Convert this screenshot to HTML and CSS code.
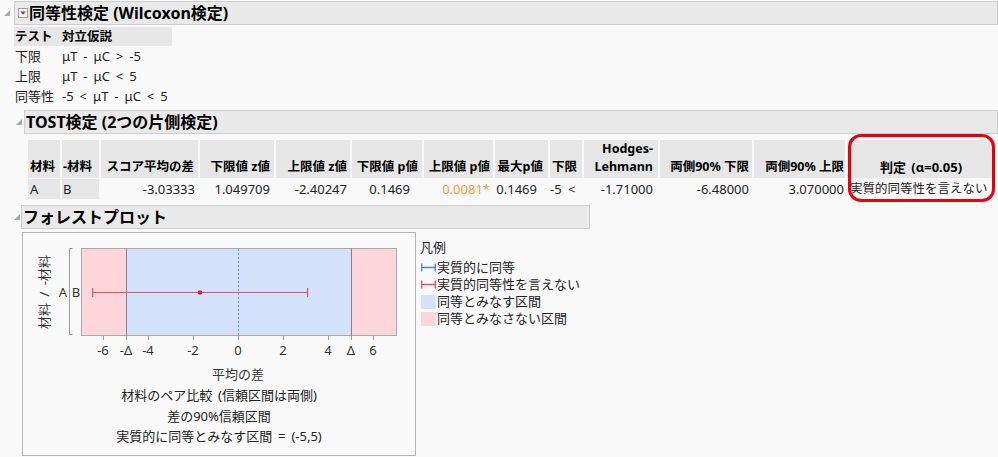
FILE: index.html
```html
<!DOCTYPE html>
<html lang="ja">
<head>
<meta charset="utf-8">
<title>同等性検定</title>
<link rel="stylesheet" href="styles.css">
</head>
<body>
<div class="report">

  <section class="outline o1">
    <div class="head">
      <svg class="disc" width="6" height="6" viewBox="0 0 6 6"><path d="M6 0V6H0Z" fill="#a9a9a9"/></svg>
      <div class="bar">
        <svg class="redtri" width="10" height="10" viewBox="0 0 10 10"><rect x="0.5" y="0.5" width="9" height="9" fill="#ffffff" stroke="#a0a0a0"/><path d="M2.2 3.6H7.8L5 6.8Z" fill="#d8141e"/></svg>
        <span class="title">同等性検定 (Wilcoxon検定)</span>
      </div>
    </div>
    <table class="hyp">
      <colgroup><col class="hc1"><col class="hc2"></colgroup>
      <thead><tr><th>テスト</th><th>対立仮説</th></tr></thead>
      <tbody>
        <tr><td>下限</td><td>μT - μC &gt; -5</td></tr>
        <tr><td>上限</td><td>μT - μC &lt; 5</td></tr>
        <tr><td>同等性</td><td>-5 &lt; μT - μC &lt; 5</td></tr>
      </tbody>
    </table>
  </section>

  <section class="outline o2">
    <div class="head">
      <svg class="disc" width="6" height="6" viewBox="0 0 6 6"><path d="M6 0V6H0Z" fill="#a9a9a9"/></svg>
      <div class="bar"><span class="title">TOST検定 (2つの片側検定)</span></div>
    </div>
    <table class="tost">
      <colgroup>
        <col class="w32"><col class="w37"><col class="w97"><col class="w74"><col class="w74"><col class="w70"><col class="w69"><col class="w53"><col class="w32"><col class="w74"><col class="w92"><col class="w91"><col class="w148">
      </colgroup>
      <thead>
        <tr>
          <th>材料</th><th>-材料</th><th>スコア平均の差</th><th>下限値 z値</th><th>上限値 z値</th><th>下限値 p値</th><th>上限値 p値</th><th>最大p値</th><th>下限</th><th>Hodges-<br>Lehmann</th><th>両側90% 下限</th><th>両側90% 上限</th><th>判定 (α=0.05)</th>
        </tr>
      </thead>
      <tbody>
        <tr>
          <td>A</td><td>B</td><td>-3.03333</td><td>1.049709</td><td>-2.40247</td><td>0.1469</td><td class="sig">0.0081*</td><td>0.1469</td><td class="lim">-5 &lt;</td><td>-1.71000</td><td>-6.48000</td><td>3.070000</td><td class="verdict">実質的同等性を言えない</td>
        </tr>
      </tbody>
    </table>
    <div class="callout"></div>
  </section>

  <section class="outline o3">
    <div class="head">
      <svg class="disc" width="6" height="6" viewBox="0 0 6 6"><path d="M6 0V6H0Z" fill="#a9a9a9"/></svg>
      <div class="bar"><span class="title">フォレストプロット</span></div>
    </div>
    <div class="plotrow">
      <div class="frame">
        <svg class="plot" width="392" height="152" viewBox="0 0 392 152">
          <rect x="58" y="15" width="45" height="88" fill="#fdd6dc"/>
          <rect x="103" y="15" width="225" height="88" fill="#d4e1fb"/>
          <rect x="328" y="15" width="46" height="88" fill="#fdd6dc"/>
          <rect x="58.5" y="15.5" width="315" height="87" fill="none" stroke="#a8a8a8"/>
          <line x1="103.5" y1="15" x2="103.5" y2="103" stroke="#8a7d98" stroke-width="1"/>
          <line x1="328.5" y1="15" x2="328.5" y2="103" stroke="#8a7d98" stroke-width="1"/>
          <line x1="215.5" y1="16" x2="215.5" y2="102" stroke="#5b8def" stroke-width="1" stroke-dasharray="2 2"/>
          <g stroke="#e8506a" stroke-width="1.2">
            <line x1="69.7" y1="59.5" x2="284.6" y2="59.5"/>
            <line x1="69.7" y1="55" x2="69.7" y2="64"/>
            <line x1="284.6" y1="55" x2="284.6" y2="64"/>
          </g>
          <circle cx="177" cy="59.5" r="2.3" fill="#e0203f"/>
          <g stroke="#9a9a9a" stroke-width="1">
            <line x1="80.5" y1="103" x2="80.5" y2="107"/>
            <line x1="125.5" y1="103" x2="125.5" y2="107"/>
            <line x1="170.5" y1="103" x2="170.5" y2="107"/>
            <line x1="215.5" y1="103" x2="215.5" y2="107"/>
            <line x1="260.5" y1="103" x2="260.5" y2="107"/>
            <line x1="305.5" y1="103" x2="305.5" y2="107"/>
            <line x1="350.5" y1="103" x2="350.5" y2="107"/>
            <line x1="103.5" y1="103" x2="103.5" y2="107"/>
            <line x1="328.5" y1="103" x2="328.5" y2="107"/>
            <path d="M49.5 15.5H46.5V101.5H49.5" fill="none"/>
          </g>
          <g class="ticks" text-anchor="middle">
            <text x="80" y="122">-6</text>
            <text x="103" y="122">-Δ</text>
            <text x="125" y="122">-4</text>
            <text x="170" y="122">-2</text>
            <text x="215" y="122">0</text>
            <text x="260" y="122">2</text>
            <text x="305" y="122">4</text>
            <text x="328" y="122">Δ</text>
            <text x="350" y="122">6</text>
            <text x="215" y="146">平均の差</text>
            <text x="40" y="64">A</text>
            <text x="53" y="64">B</text>
            <text class="ylab" x="0" y="0" transform="translate(26 59) rotate(-90)">材料 / -材料</text>
          </g>
        </svg>
        <div class="caption">
          <p>材料のペア比較 (信頼区間は両側)</p>
          <p>差の90%信頼区間</p>
          <p>実質的に同等とみなす区間 = (-5,5)</p>
        </div>
      </div>
      <div class="legend">
        <div class="ltitle">凡例</div>
        <ul class="litems">
          <li><svg class="licon" width="15" height="9" viewBox="0 0 15 9"><path d="M0.75 0.5V8.5M0.5 4.5H14.5M14.25 0.5V8.5" fill="none" stroke="#4a82f2" stroke-width="1.4"/></svg><span>実質的に同等</span></li>
          <li><svg class="licon" width="15" height="9" viewBox="0 0 15 9"><path d="M0.75 0.5V8.5M0.5 4.5H14.5M14.25 0.5V8.5" fill="none" stroke="#e8506a" stroke-width="1.4"/></svg><span>実質的同等性を言えない</span></li>
          <li><span class="sw blue"></span><span>同等とみなす区間</span></li>
          <li><span class="sw pink"></span><span>同等とみなさない区間</span></li>
        </ul>
      </div>
    </div>
  </section>

</div>
</body>
</html>
```

FILE: styles.css
```css
* { box-sizing: border-box; }
html, body { margin: 0; padding: 0; }
body {
  width: 998px;
  height: 457px;
  overflow: hidden;
  background: #f9f9f9;
  color: #222;
  font-family: "Noto Sans", "Noto Sans CJK JP", sans-serif;
  font-size: 13px;
}
.report { padding-top: 1px; }

.outline { position: relative; }
.head { display: flex; align-items: center; }
.disc { flex: none; display: block; }
.bar {
  flex: 1;
  height: 24px;
  background: #e9e9e9;
  border: 1px solid #cdcdcd;
  display: flex;
  align-items: center;
  color: #000;
  font-weight: bold;
  font-size: 16px;
  line-height: 22px;
  white-space: nowrap;
}

.o1 .head { padding-left: 4px; }
.o1 .disc { margin-right: 4px; }
.o1 .bar { padding-left: 3px; }
.redtri { display: block; flex: none; margin-right: 1px; }

.o2 .head { margin-top: 4px; padding-left: 16px; }
.o2 .disc { margin-right: 2px; }
.o2 .bar { padding-left: 1px; }

.o3 .head { margin-top: 5px; padding-left: 14px; width: 590px; }
.o3 .disc { margin-right: 1px; }
.o3 .bar { padding-left: 1px; }

/* hypothesis table */
.hyp {
  margin: 2px 0 0 14px;
  border-collapse: collapse;
  table-layout: fixed;
}
.hc1 { width: 48px; }
.hc2 { width: 110px; }
.hyp th {
  background: #e6e6e6;
  height: 19px;
  padding: 0;
  text-align: left;
  font-weight: bold;
  font-size: 12.5px;
  line-height: 19px;
  color: #000;
}
.hyp td {
  height: 20px;
  padding: 0;
  line-height: 20px;
  font-size: 13px;
  white-space: nowrap;
  word-spacing: 2.6px;
}
.hyp th:first-child, .hyp td:first-child { padding-left: 1px; }

/* TOST table */
.tost {
  margin: 5px 0 0 26px;
  border-collapse: separate;
  border-spacing: 2px 1px;
  table-layout: fixed;
}
.w32 { width: 32px; }
.w37 { width: 37px; }
.w97 { width: 97px; }
.w74 { width: 74px; }
.w70 { width: 70px; }
.w69 { width: 69px; }
.w53 { width: 53px; }
.w92 { width: 92px; }
.w91 { width: 91px; }
.w148 { width: 148px; }

.tost th {
  background: #e6e6e6;
  height: 38px;
  vertical-align: bottom;
  padding: 0 3px 2px 0;
  text-align: right;
  font-weight: bold;
  font-size: 12.5px;
  line-height: 18px;
  color: #000;
  white-space: nowrap;
}
.tost td {
  height: 20px;
  padding: 0 3px 0 0;
  text-align: right;
  line-height: 20px;
  font-size: 13px;
  white-space: nowrap;
  color: #222;
}
.tost th:nth-child(1), .tost td:nth-child(1) { text-align: left; padding: 0 0 2px 2px; background: #e6e6e6; }
.tost td:nth-child(1) { padding: 0 0 0 2px; }
.tost th:nth-child(2), .tost td:nth-child(2) { text-align: left; padding-left: 1px; background: #e6e6e6; }
.tost th:nth-child(2) { padding-bottom: 2px; }
.tost th:nth-child(3), .tost th:nth-child(6), .tost th:nth-child(4) { padding-right: 4px; }
.tost th:nth-child(8), .tost th:nth-child(9), .tost th:nth-child(10) { padding-right: 5px; }
.tost th:nth-child(12), .tost td:nth-child(12) { padding-right: 1px; }
.tost th:nth-child(13) { text-align: center; padding-right: 0; font-size: 13px; word-spacing: 2px; }
.tost td:nth-child(4) { padding-right: 4px; }
.tost td:nth-child(6) { padding-right: 12px; }
.tost td:nth-child(8) { padding-right: 11px; }
.tost td.lim { text-align: left; padding: 0; word-spacing: 3px; }
.tost td:nth-child(10) { padding-right: 5px; }
.tost td.sig { color: #f39b3a; }
.tost td.verdict { text-align: left; padding: 0 0 0 3px; font-size: 12.5px; }

.callout {
  position: absolute;
  left: 848px;
  top: 24px;
  width: 147px;
  height: 68px;
  border: 3px solid #e60012;
  border-radius: 13px;
  pointer-events: none;
}

/* forest plot */
.plotrow {
  display: flex;
  align-items: flex-start;
  margin: 3px 0 0 22px;
}
.frame {
  width: 394px;
  height: 224px;
  border: 1px solid #b4b4b4;
  background: #f9f9f9;
}
.plot { display: block; }
.ticks text {
  font-family: "Noto Sans", "Noto Sans CJK JP", sans-serif;
  font-size: 13px;
  fill: #333;
}
.ticks text.ylab { word-spacing: 3px; }
.caption p {
  margin: 0;
  text-align: center;
  line-height: 20.5px;
  font-size: 13px;
  color: #222;
  word-spacing: 2.5px;
}

.legend {
  margin: 7px 0 0 4px;
  font-size: 13px;
  color: #222;
}
.ltitle { line-height: 17px; }
.litems {
  list-style: none;
  margin: 3px 0 0 0;
  padding: 0 0 0 1px;
}
.litems li {
  display: flex;
  align-items: center;
  height: 17px;
  line-height: 17px;
  white-space: nowrap;
}
.licon { display: block; flex: none; margin-right: 1px; }
.sw { display: block; flex: none; width: 15px; height: 14px; margin-right: 1px; }
.sw.blue { background: #d4e1fb; }
.sw.pink { background: #fdd6dc; }
```
